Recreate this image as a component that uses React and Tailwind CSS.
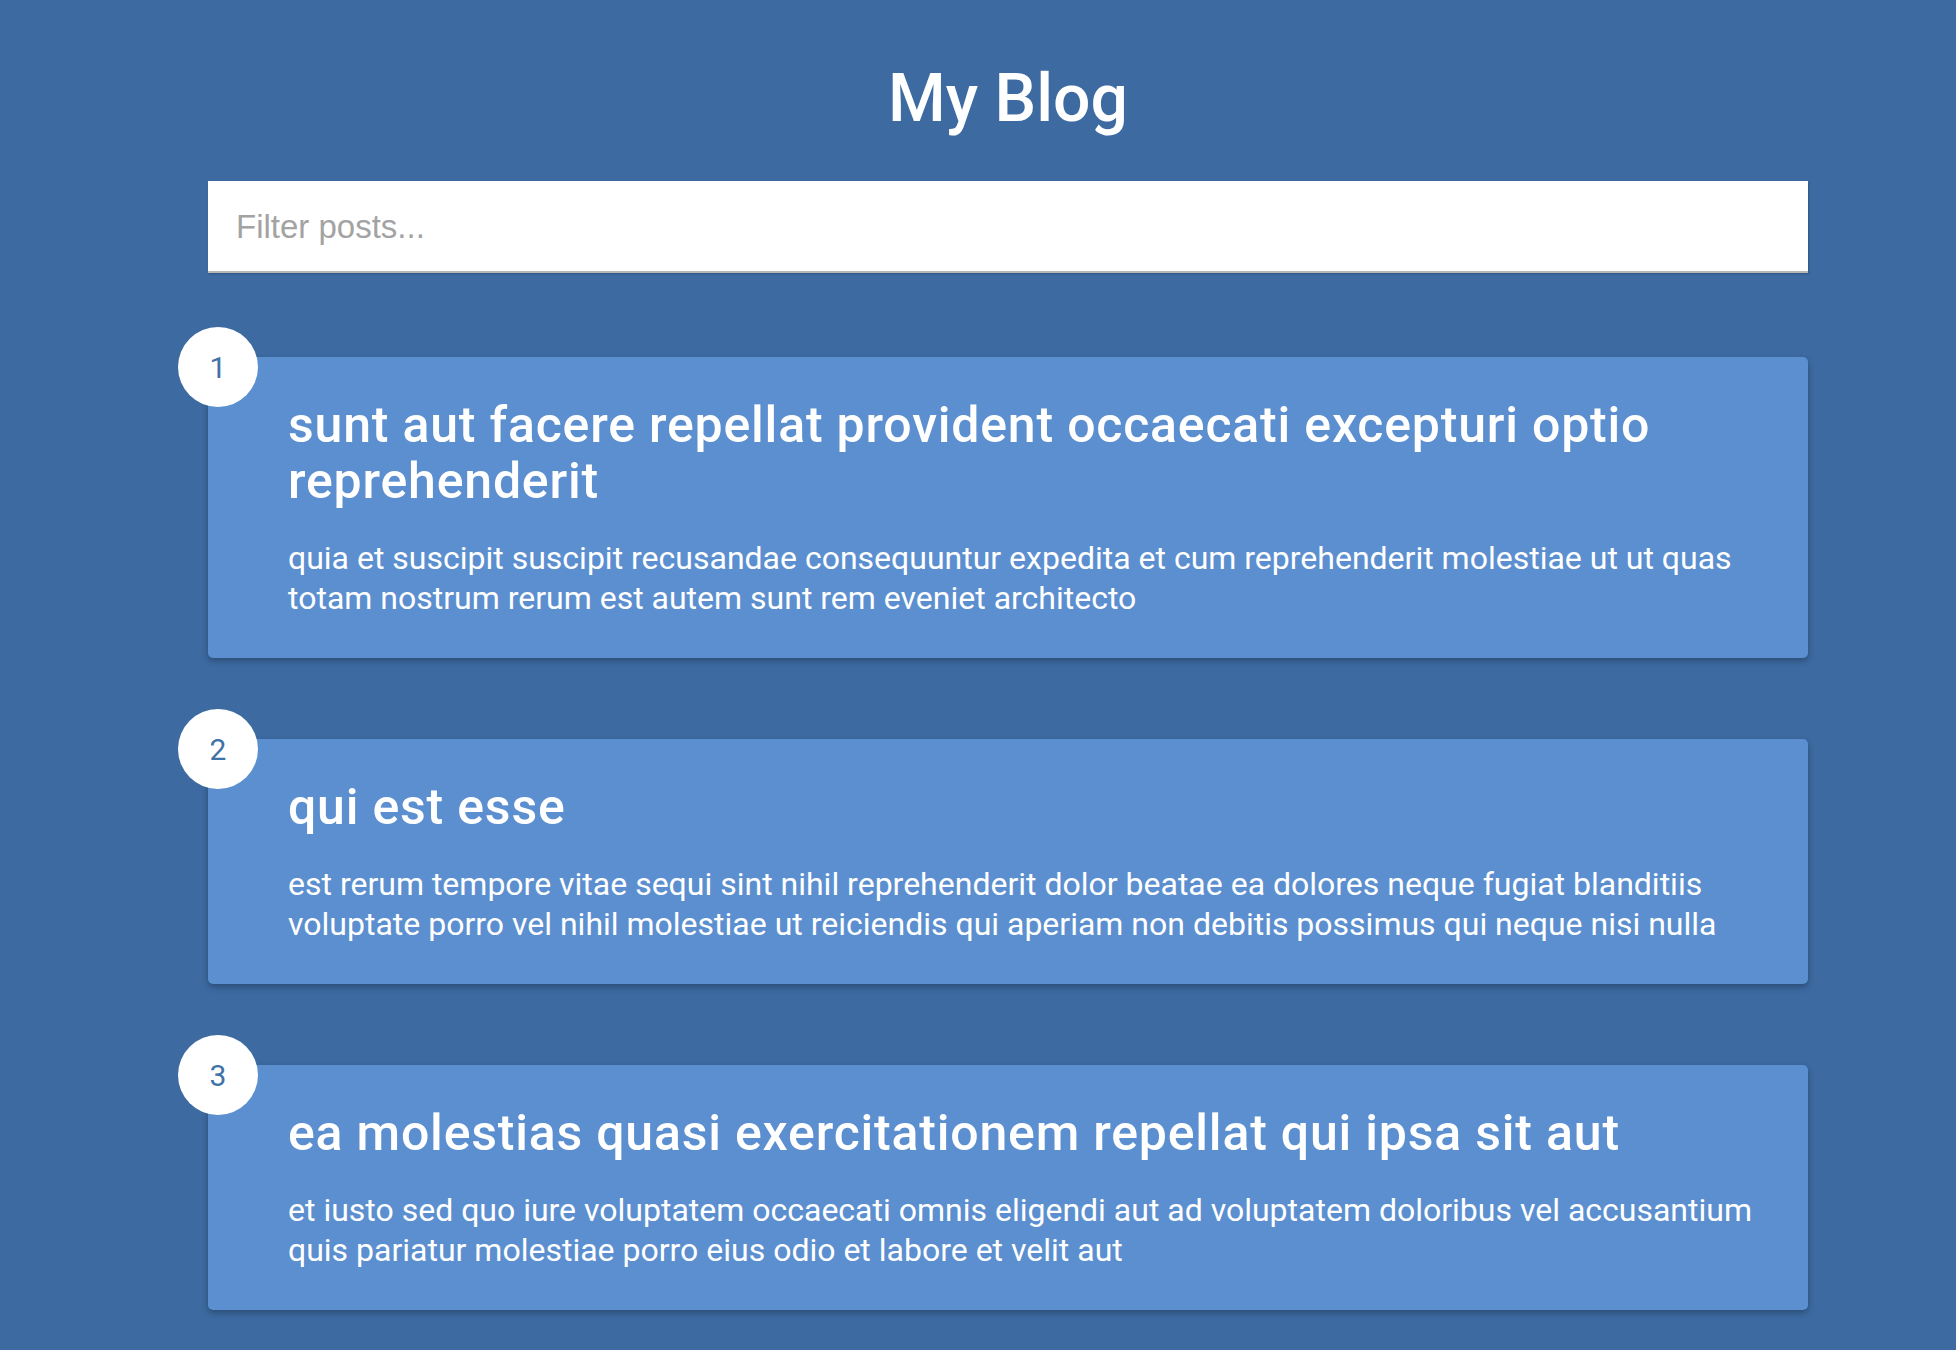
import { useState } from 'react';

const posts = [
  {
    id: 1,
    title: 'sunt aut facere repellat provident occaecati excepturi optio reprehenderit',
    body: 'quia et suscipit suscipit recusandae consequuntur expedita et cum reprehenderit molestiae ut ut quas totam nostrum rerum est autem sunt rem eveniet architecto',
  },
  {
    id: 2,
    title: 'qui est esse',
    body: 'est rerum tempore vitae sequi sint nihil reprehenderit dolor beatae ea dolores neque fugiat blanditiis voluptate porro vel nihil molestiae ut reiciendis qui aperiam non debitis possimus qui neque nisi nulla',
  },
  {
    id: 3,
    title: 'ea molestias quasi exercitationem repellat qui ipsa sit aut',
    body: 'et iusto sed quo iure voluptatem occaecati omnis eligendi aut ad voluptatem doloribus vel accusantium quis pariatur molestiae porro eius odio et labore et velit aut',
  },
];

function PostCard({ post }) {
  return (
    <div className="relative rounded-[5px] bg-[#5c8fcf] pb-[40px] pl-[80px] pr-[40px] pt-[40px] shadow-[0_3px_6px_rgba(0,0,0,0.28)]">
      <div className="absolute left-[-30px] top-[-30px] flex h-[80px] w-[80px] items-center justify-center rounded-full bg-white text-[30px] text-[#3f72a6]">
        {post.id}
      </div>
      <h2 className="text-[50px] font-medium leading-[56px] tracking-[0.8px] text-white">
        {post.title}
      </h2>
      <p className="mt-[29px] text-[32px] leading-[40px] text-white">{post.body}</p>
    </div>
  );
}

export default function App() {
  const [filter, setFilter] = useState('');

  const visible = posts.filter(
    (p) => p.title.includes(filter) || p.body.includes(filter)
  );

  return (
    <div className="min-h-screen bg-[#3c6aa1] font-['Roboto',sans-serif]">
      <div className="ml-[208px] w-[1600px] pb-[40px] pt-[66px]">
        <h1 className="text-center text-[66px] font-medium leading-none text-white">My Blog</h1>

        <input
          type="text"
          value={filter}
          onChange={(e) => setFilter(e.target.value)}
          placeholder="Filter posts..."
          className="mt-[49px] block h-[92px] w-full border-b-2 border-[#b8b8b2] bg-white px-[28px] pt-[2px] font-['Liberation_Sans',sans-serif] text-[33px] text-gray-700 shadow-[1px_1px_2px_rgba(0,0,0,0.2)] outline-none placeholder:text-[#a3a3a3]"
        />

        <div className="mt-[84px] flex flex-col gap-[81px]">
          {visible.map((post) => (
            <PostCard key={post.id} post={post} />
          ))}
        </div>
      </div>
    </div>
  );
}
